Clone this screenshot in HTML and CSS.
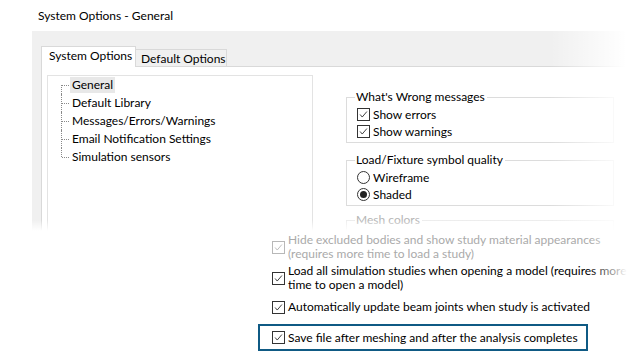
FILE: index.html
```html
<!DOCTYPE html>
<html lang="en">
<head>
<meta charset="utf-8">
<title>System Options - General</title>
<link rel="stylesheet" href="styles.css">
</head>
<body>
<div class="title">System Options - General</div>

<div class="dialog">
  <div class="tabs">
    <div class="tab active">System Options</div>
    <div class="tab">Default Options</div>
  </div>
  <div class="panel">
    <ul class="tree">
      <li class="first"><span class="label selected">General</span></li>
      <li><span class="label">Default Library</span></li>
      <li><span class="label">Messages/Errors/Warnings</span></li>
      <li><span class="label">Email Notification Settings</span></li>
      <li class="last"><span class="label">Simulation sensors</span></li>
    </ul>
    <div class="groups">
      <fieldset class="group g1">
        <legend>What's Wrong messages</legend>
        <div class="row"><span class="cb checked"><svg viewBox="0 0 13 13"><polyline points="2.5,6.5 5,9.5 10.5,3"/></svg></span>Show errors</div>
        <div class="row"><span class="cb checked"><svg viewBox="0 0 13 13"><polyline points="2.5,6.5 5,9.5 10.5,3"/></svg></span>Show warnings</div>
      </fieldset>
      <fieldset class="group g2">
        <legend>Load/Fixture symbol quality</legend>
        <div class="row"><span class="radio"></span>Wireframe</div>
        <div class="row"><span class="radio on"></span>Shaded</div>
      </fieldset>
      <fieldset class="group g3 disabled">
        <legend>Mesh colors</legend>
      </fieldset>
    </div>
  </div>
  <div class="fade-right"></div>
  <div class="fade-bottom"></div>
</div>

<div class="options">
  <div class="opt disabled o1"><span class="cb checked"><svg viewBox="0 0 13 13"><polyline points="2.5,6.5 5,9.5 10.5,3"/></svg></span><span class="txt">Hide excluded bodies and show study material appearances<br>(requires more time to load a study)</span></div>
  <div class="opt o2"><span class="cb checked"><svg viewBox="0 0 13 13"><polyline points="2.5,6.5 5,9.5 10.5,3"/></svg></span><span class="txt">Load all simulation studies when opening a model (requires more<br>time to open a model)</span></div>
  <div class="opt o3"><span class="cb checked"><svg viewBox="0 0 13 13"><polyline points="2.5,6.5 5,9.5 10.5,3"/></svg></span><span class="txt">Automatically update beam joints when study is activated</span></div>
  <div class="opt highlight"><span class="cb checked"><svg viewBox="0 0 13 13"><polyline points="2.5,6.5 5,9.5 10.5,3"/></svg></span><span class="txt">Save file after meshing and after the analysis completes</span></div>
  <div class="fade-right2"></div>
</div>
</body>
</html>
```

FILE: styles.css
```css
* { box-sizing: border-box; }
html, body { margin: 0; padding: 0; background: #fff; }
body {
  width: 640px;
  height: 360px;
  overflow: hidden;
  font-family: "Lato", "Noto Sans", sans-serif;
  font-size: 12px;
  color: #000;
  position: relative;
}
.title {
  height: 31px;
  padding: 8px 0 0 38px;
  line-height: 16px;
}
.dialog {
  position: relative;
  margin-left: 32px;
  height: 201px;
  background: #f0f0f0;
  padding: 15px 0 0 9px;
  overflow: hidden;
}
.tabs {
  display: flex;
  height: 20px;
  align-items: flex-end;
  position: relative;
  z-index: 1;
}
.tab {
  height: 17px;
  width: 91px;
  border: 1px solid #d9d9d9;
  border-bottom: none;
  border-left: none;
  background: #f0f0f0;
  line-height: 17px;
  padding-left: 5px;
  white-space: nowrap;
}
.tab.active {
  height: 21px;
  width: 95px;
  margin-bottom: -1px;
  background: #fff;
  border-left: 1px solid #d9d9d9;
  padding-left: 7px;
  line-height: 18px;
}
.panel {
  display: flex;
  height: 170px;
  background: #fff;
  border-top: 1px solid #d9d9d9;
  border-left: 1px solid #d9d9d9;
  padding: 8px 0 0 5px;
}
.tree {
  list-style: none;
  margin: 0;
  padding: 0 0 0 13px;
  width: 266px;
  height: 170px;
  border: 1px solid #e3e3e3;
}
.tree li {
  position: relative;
  height: 18px;
  line-height: 18px;
  padding-left: 9px;
}
.tree li::before {
  content: "";
  position: absolute;
  left: 0;
  top: 0;
  bottom: 0;
  border-left: 1px dotted #8a8a8a;
}
.tree li.first::before { top: 9px; }
.tree li.last::before { bottom: 9px; }
.tree li::after {
  content: "";
  position: absolute;
  left: 1px;
  top: 9px;
  width: 7px;
  border-top: 1px dotted #8a8a8a;
}
.label {
  display: inline-block;
  padding: 0 2px;
  line-height: 16px;
}
.label.selected { background: #e8e8e8; }
.groups {
  margin-left: 33px;
  width: 268px;
  padding-top: 14px;
}
.group {
  margin: 0;
  border: 1px solid #dcdcdc;
  padding: 0 0 1px 8px;
  min-width: 0;
}
.group.g1 { padding-bottom: 2px; }
.group legend {
  padding: 0 2px 0 1px;
  line-height: 16px;
  color: #000;
}
.group.g2 { margin-top: 9px; padding-bottom: 2px; }
.group.g3 { margin-top: 6px; height: 30px; }
.group.disabled { border-color: #ececec; }
.group.disabled legend { color: #b5b5b5; }
.row {
  display: flex;
  align-items: center;
  height: 17px;
  padding-left: 2px;
  gap: 3px;
}
.group .row:first-of-type { margin-top: 1px; }
.cb {
  flex: none;
  width: 13px;
  height: 13px;
  border: 1px solid #333;
  background: #fff;
  display: inline-flex;
}
.cb svg {
  width: 11px;
  height: 11px;
  fill: none;
  stroke: #333;
  stroke-width: 1.1;
}
.radio {
  flex: none;
  width: 13px;
  height: 13px;
  border: 1px solid #333;
  border-radius: 50%;
  background: #fff;
  display: inline-flex;
  align-items: center;
  justify-content: center;
}
.radio.on::after {
  content: "";
  width: 7px;
  height: 7px;
  border-radius: 50%;
  background: #222;
}
.fade-right {
  position: absolute;
  top: 0;
  right: 0;
  bottom: 0;
  width: 90px;
  background: linear-gradient(to right, rgba(255,255,255,0), #fff 85%);
  z-index: 2;
}
.fade-bottom {
  position: absolute;
  left: 0;
  right: 0;
  bottom: 0;
  height: 12px;
  background: linear-gradient(to bottom, rgba(255,255,255,0), #fff 90%);
  z-index: 2;
}
.options {
  position: relative;
  margin-left: 258px;
  padding-top: 1px;
}
.opt {
  display: flex;
  align-items: center;
  gap: 3px;
  padding-left: 14px;
  white-space: nowrap;
}
.txt { line-height: 14px; }
.opt.o2 { margin-top: 3px; }
.opt.o3 { margin-top: 8px; }
.opt.disabled { color: #aaaaaa; }
.opt.disabled .cb { border-color: #b8b8b8; }
.opt.disabled .cb svg { stroke: #b8b8b8; }
.opt.highlight {
  margin-top: 10px;
  width: 330px;
  height: 27px;
  border: 2px solid #0f5a84;
  padding-left: 12px;
}
.fade-right2 {
  position: absolute;
  top: 0;
  bottom: 0;
  left: 332px;
  width: 50px;
  background: linear-gradient(to right, rgba(255,255,255,0), #fff 75%);
}
```
